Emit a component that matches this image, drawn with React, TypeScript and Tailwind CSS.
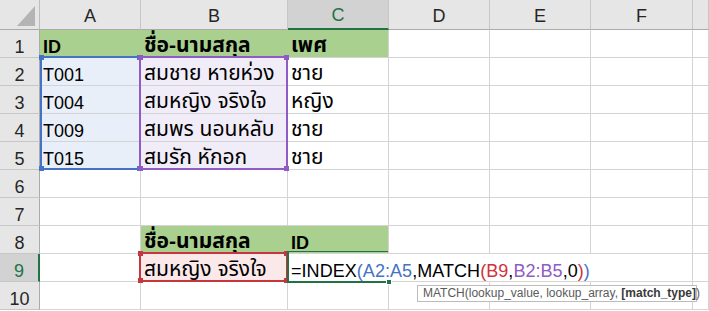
import React from "react";

const COLS = ["A", "B", "C", "D", "E", "F", ""];

type Cell = { text?: string; bold?: boolean; fill?: string };

const GREEN = "bg-[#a9d08e]";

const DATA: Record<number, Record<string, Cell>> = {
    1: {
        A: { text: "ID", bold: true, fill: GREEN },
        B: { text: "ชื่อ-นามสกุล", bold: true, fill: GREEN },
        C: { text: "เพศ", bold: true, fill: GREEN },
    },
    2: { A: { text: "T001" }, B: { text: "สมชาย หายห่วง" }, C: { text: "ชาย" } },
    3: { A: { text: "T004" }, B: { text: "สมหญิง จริงใจ" }, C: { text: "หญิง" } },
    4: { A: { text: "T009" }, B: { text: "สมพร นอนหลับ" }, C: { text: "ชาย" } },
    5: { A: { text: "T015" }, B: { text: "สมรัก หักอก" }, C: { text: "ชาย" } },
    8: {
        B: { text: "ชื่อ-นามสกุล", bold: true, fill: GREEN },
        C: { text: "ID", bold: true, fill: GREEN },
    },
    9: { B: { text: "สมหญิง จริงใจ" } },
};

const isThai = (s?: string) => !!s && /[\u0E00-\u0E7F]/.test(s);

function Formula() {
    return (
        <span className="relative z-10 tracking-[0.05px]">
            =INDEX<span className="text-[#4472c4]">(A2:A5</span>,MATCH
            <span className="text-[#d0323d]">(B9</span>,
            <span className="text-[#8e5cc4]">B2:B5</span>,0
            <span className="text-[#d0323d]">)</span>
            <span className="text-[#4472c4]">)</span>
        </span>
    );
}

function cellBg(row: number, col: string, cell?: Cell) {
    if (cell?.fill) return cell.fill;
    if (col === "A" && row >= 2 && row <= 5) return "bg-[#e8eff9]";
    if (col === "B" && row >= 2 && row <= 5) return "bg-[#f1edf8]";
    if (col === "B" && row === 9) return "bg-[#fbe9ea]";
    return "";
}

// reference range outline with the four corner handles
function Range({ className, handle }: { className: string; handle: string }) {
    return (
        <div className={`absolute border-2 ${className}`}>
            <div className={`absolute -left-[3px] -top-[3px] w-[5px] h-[5px] ${handle}`} />
            <div className={`absolute -right-[3px] -top-[3px] w-[5px] h-[5px] ${handle}`} />
            <div className={`absolute -left-[3px] -bottom-[3px] w-[5px] h-[5px] ${handle}`} />
            <div className={`absolute -right-[3px] -bottom-[3px] w-[5px] h-[5px] ${handle}`} />
        </div>
    );
}

export default function App() {
    const rows = Array.from({ length: 10 }, (_, i) => i + 1);

    return (
        <div className="relative w-[709px] h-[311px] overflow-hidden bg-white text-black text-[18px] leading-none font-['Liberation_Sans','Noto_Sans_Thai',Tahoma,sans-serif]">
            <div className="grid grid-cols-[40px_101px_147px_101px_101px_101px_102px_1fr] grid-rows-[30px_repeat(10,28px)]">
                {/* corner */}
                <div className="flex items-end justify-end pr-[3px] pb-[2px] bg-[#e6e6e6] border-r border-b border-r-[#bdbdbd] border-b-[#ababab]">
                    <svg width="19" height="21" viewBox="0 0 19 21">
                        <polygon points="18,0 18,20 0,20" fill="#b4b4b4" />
                    </svg>
                </div>
                {COLS.map((c, i) =>
                    c === "C" ? (
                        <div
                            key={i}
                            className="flex items-end justify-center pb-[4px] bg-[#d2d2d2] text-[#217346] border-r border-r-[#c6c6c6] border-b-2 border-b-[#217346]"
                        >
                            {c}
                        </div>
                    ) : (
                        <div
                            key={i}
                            className="flex items-end justify-center pb-[4px] bg-[#e6e6e6] text-[#262626] border-r border-b border-r-[#c6c6c6] border-b-[#ababab]"
                        >
                            {c}
                        </div>
                    )
                )}

                {rows.map((r) => (
                    <React.Fragment key={r}>
                        {r === 9 ? (
                            <div className="flex items-end justify-center pb-[1px] bg-[#d2d2d2] text-[#217346] border-b border-b-[#c6c6c6] border-r-2 border-r-[#217346]">
                                {r}
                            </div>
                        ) : (
                            <div className="flex items-end justify-center pb-[1px] bg-[#e6e6e6] text-[#262626] border-b border-b-[#c6c6c6] border-r border-r-[#ababab]">
                                {r}
                            </div>
                        )}
                        {COLS.map((c, i) => {
                            const cell = DATA[r]?.[c];
                            const bg = cellBg(r, c, cell);
                            const greenNext = !!cell?.fill && !!DATA[r]?.[COLS[i + 1]]?.fill;
                            const hideRight = r === 9 && (c === "C" || c === "D" || c === "E");
                            return (
                                <div
                                    key={c + i}
                                    className={`flex items-end px-[3px] pb-[1px] whitespace-nowrap border-r border-b border-[#d4d4d4] ${bg} ${
                                        greenNext ? "border-r-[#a9d08e]" : ""
                                    } ${hideRight ? "border-r-transparent" : ""} ${cell?.bold ? "font-bold" : ""}`}
                                >
                                    {r === 9 && c === "C" ? (
                                        <Formula />
                                    ) : isThai(cell?.text) ? (
                                        <span className="relative -top-[1px] text-[21px]">{cell?.text}</span>
                                    ) : (
                                        cell?.text
                                    )}
                                </div>
                            );
                        })}
                    </React.Fragment>
                ))}
            </div>

            <Range className="left-[40px] top-[56px] w-[101px] h-[114px] border-[#4472c4]" handle="bg-[#4472c4]" />
            <Range className="left-[139px] top-[56px] w-[149px] h-[114px] border-[#8e5cc4]" handle="bg-[#8e5cc4]" />
            <Range className="left-[139px] top-[252px] w-[149px] h-[30px] border-[#c4373f]" handle="bg-[#c4373f]" />

            {/* active cell C9 */}
            <div className="absolute left-[287px] top-[251px] w-[101px] h-[32px] border-l-2 border-t border-b-2 border-[#217346]">
                <div className="absolute -right-[4px] -bottom-[4px] w-[6px] h-[6px] bg-[#217346] border border-white" />
            </div>

            {/* function tooltip */}
            <div className="absolute left-[417px] top-[285px] h-[17px] w-[280px] bg-white border border-[#bcbcbc] px-[5px] text-[12px] leading-[15px] text-[#5a5a5a] whitespace-nowrap font-['Liberation_Sans',sans-serif]">
                MATCH(lookup_value, lookup_array, <span className="font-bold text-[#3a3a3a]">[match_type]</span>)
            </div>
        </div>
    );
}
